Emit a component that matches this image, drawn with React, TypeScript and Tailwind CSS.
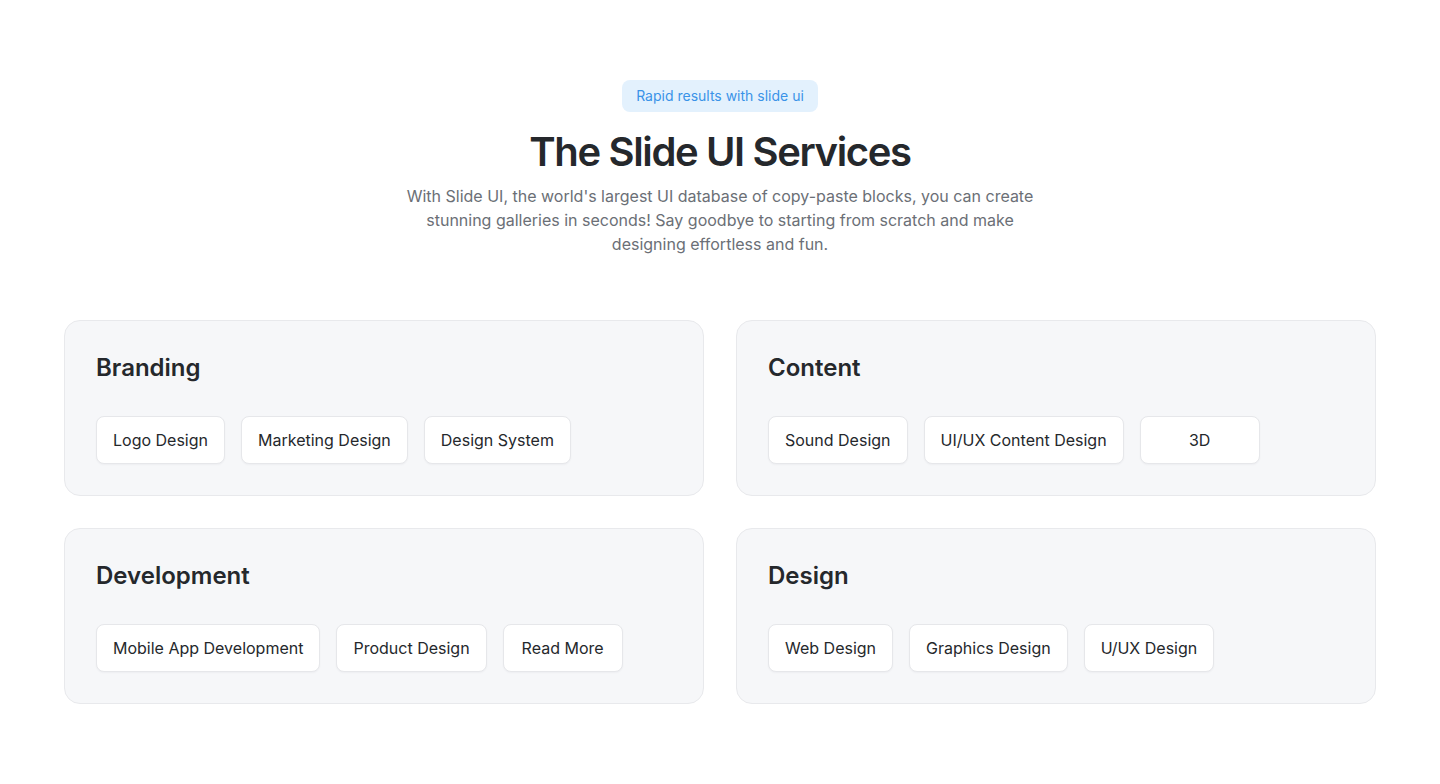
import React from 'react';

interface ServiceGroup {
  title: string;
  items: string[];
}

const groups: ServiceGroup[] = [
  { title: 'Branding', items: ['Logo Design', 'Marketing Design', 'Design System'] },
  { title: 'Content', items: ['Sound Design', 'UI/UX Content Design', '3D'] },
  { title: 'Development', items: ['Mobile App Development', 'Product Design', 'Read More'] },
  { title: 'Design', items: ['Web Design', 'Graphics Design', 'U/UX Design'] },
];

const ServiceCard: React.FC<{ group: ServiceGroup }> = ({ group }) => (
  <div className="rounded-2xl border border-[#e8e9ec] bg-[#f6f7f9] p-[31px]">
    <h3 className="text-2xl leading-8 font-semibold text-[#25282c]">{group.title}</h3>
    <div className="mt-8 flex flex-wrap gap-4">
      {group.items.map((item) => (
        <button
          key={item}
          type="button"
          className="h-12 min-w-[120px] rounded-lg border border-[#e6e7ea] bg-white px-4 text-base text-[#25282c] shadow-[0_1px_2px_rgba(16,24,40,0.04)]"
        >
          {item}
        </button>
      ))}
    </div>
  </div>
);

export default function App() {
  return (
    <div className="min-h-screen bg-white px-16 pt-20 pb-20 font-['Inter','Liberation_Sans',sans-serif]">
      <div className="flex flex-col items-center text-center">
        <span className="rounded-lg bg-[#e3f1fd] px-3.5 py-1.5 text-sm leading-5 text-[#3a93e8]">
          Rapid results with slide ui
        </span>
        <h1 className="mt-4 text-[40px] leading-[48px] font-semibold tracking-[-0.034em] text-[#25282c]">
          The Slide UI Services
        </h1>
        <p className="mt-2 max-w-[640px] text-base leading-6 text-[#6b6f76]">
          With Slide UI, the world's largest UI database of copy-paste blocks, you can create stunning
          galleries in seconds! Say goodbye to starting from scratch and make designing effortless and fun.
        </p>
      </div>

      <div className="mt-16 grid grid-cols-2 gap-8">
        {groups.map((g) => (
          <ServiceCard key={g.title} group={g} />
        ))}
      </div>
    </div>
  );
}
